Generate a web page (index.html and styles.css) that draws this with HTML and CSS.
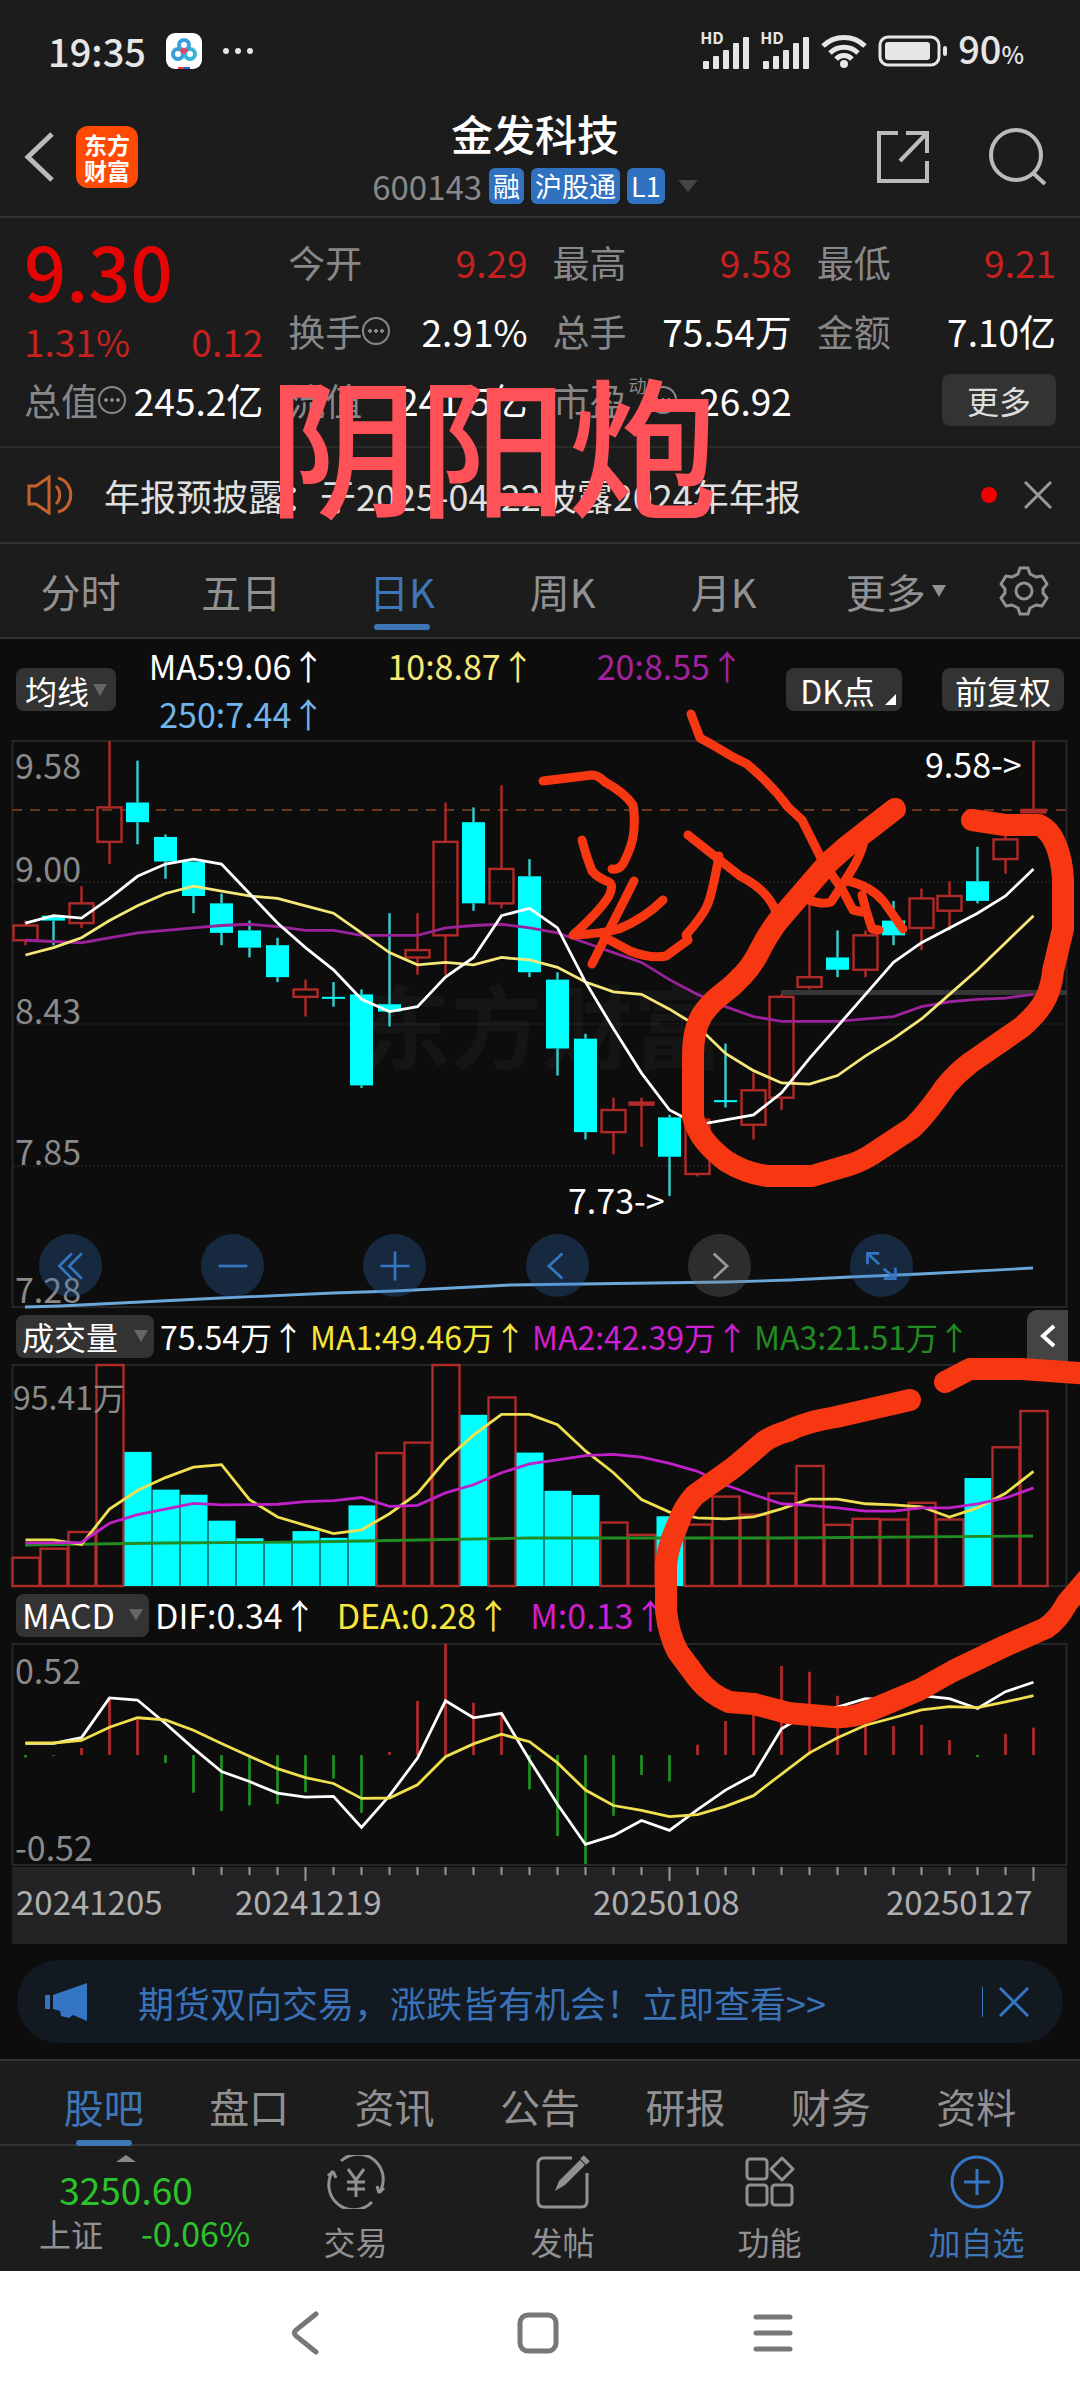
FILE: index.html
```html
<!DOCTYPE html>
<html lang="zh-CN">
<head>
<meta charset="utf-8">
<meta name="viewport" content="width=device-width, initial-scale=1">
<title>金发科技 600143</title>
<link rel="stylesheet" href="styles.css">
</head>
<body>

<div class="status">
  <span class="clock">19:35</span>
  <svg class="app-dot" width="36" height="36" viewBox="0 0 36 36">
    <rect width="36" height="36" rx="9" fill="#fff"/>
    <g fill="none" stroke-width="4"><circle cx="12" cy="21" r="5" stroke="#3aa0dc"/><circle cx="24" cy="21" r="5" stroke="#35b6d8"/><circle cx="18" cy="12" r="5" stroke="#3aa0dc"/><path d="M15 16l3 3 3-3" stroke="#e8455e"/></g>
    <path d="M12 34h6v2h-6z" fill="#e03c4c"/><path d="M18 34h6v2h-6z" fill="#2e63c9"/>
  </svg>
  <svg width="32" height="8" viewBox="0 0 32 8" fill="#e6e6e6"><circle cx="4" cy="4" r="3"/><circle cx="16" cy="4" r="3"/><circle cx="28" cy="4" r="3"/></svg>
  <div class="status-right">
    <span class="signal"><small>HD</small>
      <svg width="50" height="36" viewBox="0 0 50 36" fill="#e6e6e6"><rect x="3" y="28" width="6" height="8" rx="1"/><rect x="13" y="23" width="6" height="13" rx="1"/><rect x="23" y="17" width="6" height="19" rx="1"/><rect x="33" y="10" width="6" height="26" rx="1"/><rect x="43" y="4" width="6" height="32" rx="1"/></svg>
    </span>
    <span class="signal"><small>HD</small>
      <svg width="50" height="36" viewBox="0 0 50 36" fill="#e6e6e6"><rect x="3" y="28" width="6" height="8" rx="1"/><rect x="13" y="23" width="6" height="13" rx="1"/><rect x="23" y="17" width="6" height="19" rx="1"/><rect x="33" y="10" width="6" height="26" rx="1"/><rect x="43" y="4" width="6" height="32" rx="1"/></svg>
    </span>
    <svg width="48" height="34" viewBox="0 0 48 34" fill="none" stroke="#e6e6e6" stroke-width="5"><path d="M3 12a30 30 0 0 1 42 0M10 19a20 20 0 0 1 28 0M16 25a11 11 0 0 1 16 0"/><circle cx="24" cy="30" r="2" stroke-width="4"/></svg>
    <svg width="70" height="32" viewBox="0 0 70 32"><rect x="2" y="2" width="59" height="28" rx="8" fill="none" stroke="#e6e6e6" stroke-width="3"/><rect x="7" y="7" width="45" height="18" rx="3" fill="#e6e6e6"/><rect x="65" y="11" width="4" height="10" rx="2" fill="#e6e6e6"/></svg>
    <span class="clock">90<small>%</small></span>
  </div>
</div>

<header class="head">
  <div class="head-left">
    <button class="icon-btn" aria-label="返回"><svg width="34" height="52" viewBox="0 0 34 52" fill="none" stroke="#bbb" stroke-width="5"><path d="M30 3L6 26l24 23"/></svg></button>
    <div class="logo">东方<br>财富</div>
  </div>
  <div class="head-title">
    <h1>金发科技</h1>
    <div class="code"><span>600143</span><b>融</b><b>沪股通</b><b>L1</b><i class="tri"></i></div>
  </div>
  <div class="head-right">
    <button class="icon-btn" aria-label="分享"><svg width="54" height="54" viewBox="0 0 54 54" fill="none" stroke="#bbb" stroke-width="4"><path d="M22 3H3v48h48V31M30 3h21v20M51 3L24 31"/></svg></button>
    <button class="icon-btn" aria-label="搜索"><svg width="60" height="60" viewBox="0 0 60 60" fill="none" stroke="#bbb" stroke-width="4"><circle cx="28" cy="28" r="25"/><path d="M45 46l12 11"/></svg></button>
  </div>
</header>

<section class="quote">
  <div class="price">
    <strong>9.30</strong>
    <div class="cell red"><span>1.31%</span><span>0.12</span></div>
  </div>
  <div class="cell"><label>今开</label><span class="red">9.29</span></div>
  <div class="cell"><label>最高</label><span class="red">9.58</span></div>
  <div class="cell"><label>最低</label><span class="red">9.21</span></div>
  <div class="cell"><label>换手<i class="info"></i></label><span>2.91%</span></div>
  <div class="cell"><label>总手</label><span>75.54万</span></div>
  <div class="cell"><label>金额</label><span>7.10亿</span></div>
  <div class="cell"><label>总值<i class="info"></i></label><span>245.2亿</span></div>
  <div class="cell"><label>流值</label><span>241.5亿</span></div>
  <div class="cell"><label>市盈<sup>动</sup><i class="info"></i></label><span>26.92</span></div>
  <div class="cell end"><button class="more">更多</button></div>
  <div class="mark">阴阳炮</div>
</section>

<div class="notice">
  <svg width="48" height="40" viewBox="0 0 48 40" fill="none" stroke="#c4622a" stroke-width="3"><path d="M2 11h7L22 2v36L9 29H2zM29 11c5 5 5 13 0 18M31 3c17 4 17 30 0 34"/></svg>
  <p>年报预披露：于2025-04-22披露2024年年报</p>
  <i class="dot"></i>
  <button class="icon-btn" aria-label="关闭"><svg width="28" height="28" viewBox="0 0 28 28" stroke="#999" stroke-width="3"><path d="M1 1l26 26M27 1L1 27"/></svg></button>
</div>

<nav class="tabs">
  <button>分时</button>
  <button>五日</button>
  <button class="on">日K</button>
  <button>周K</button>
  <button>月K</button>
  <button class="drop">更多<i class="tri"></i></button>
  <button aria-label="设置"><svg width="50" height="50" viewBox="0 0 50 50" fill="none" stroke="#919193" stroke-width="3" stroke-linejoin="round"><path d="M21 2h8l2 6 6 3 6-1 5 8-4 5v4l4 5-5 8-6-1-6 3-2 6h-8l-2-6-6-3-6 1-5-8 4-5v-4l-4-5 5-8 6 1 6-3z"/><circle cx="25" cy="25" r="8"/></svg></button>
</nav>

<main class="charts">
  <div class="ma-row">
    <button class="chip">均线<i class="tri"></i></button>
    <div class="ma-list">
      <span>MA5:9.06↑</span><span class="yellow">10:8.87↑</span><span class="purple">20:8.55↑</span>
      <span class="blue">250:7.44↑</span>
    </div>
    <button class="chip dk">DK点<i class="corner"></i></button>
    <button class="chip wide">前复权</button>
  </div>

  <div class="kbox">
    <svg id="kline" class="plot" viewBox="0 0 1080 568"></svg>
    <div class="tools">
      <button aria-label="最左"><svg viewBox="0 0 40 40"><path d="M21 6L7 20l14 14M32 6L18 20l14 14"/></svg></button>
      <button aria-label="缩小"><svg viewBox="0 0 40 40"><path d="M4 20h32"/></svg></button>
      <button aria-label="放大"><svg viewBox="0 0 40 40"><path d="M4 20h32M20 4v32"/></svg></button>
      <button aria-label="左移"><svg viewBox="0 0 40 40"><path d="M26 6L11 20l15 14"/></svg></button>
      <button class="off" aria-label="右移"><svg viewBox="0 0 40 40"><path d="M14 6l15 14-15 14"/></svg></button>
      <button aria-label="全屏"><svg viewBox="0 0 40 40"><path d="M5 18V6h13M5 6l13 12M36 22v12H23M36 34L23 23"/></svg></button>
    </div>
  </div>

  <div class="ind-row">
    <button class="chip">成交量<i class="tri"></i></button>
    <span>75.54万↑</span><span class="yellow2">MA1:49.46万↑</span><span class="magenta">MA2:42.39万↑</span><span class="green2">MA3:21.51万↑</span>
    <button class="fold" aria-label="收起"><svg width="18" height="24" viewBox="0 0 18 24" fill="none" stroke="#fff" stroke-width="4"><path d="M15 2L4 12l11 10"/></svg></button>
  </div>
  <svg id="volume" class="plot" viewBox="0 0 1080 223"></svg>

  <div class="ind-row macd">
    <button class="chip">MACD<i class="tri"></i></button>
    <span>DIF:0.34↑</span><span class="yellow2">DEA:0.28↑</span><span class="magenta">M:0.13↑</span>
  </div>
  <svg id="macd" class="plot" viewBox="0 0 1080 301"></svg>

  <svg class="ink" viewBox="0 639 1080 1120" fill="none" stroke="#f73711" stroke-linecap="round" stroke-linejoin="round">
    <g stroke-width="22">
      <path d="M895 809L864 833Q845 847 829 862L778 921Q768 934 760 950T743 975Q733 986 722 994T702 1015Q693 1030 693 1055V1117Q697 1131 705 1141T726 1161Q745 1173 767 1176H812L846 1166Q858 1163 871 1155L912 1128Q926 1115 946 1086Q957 1073 970 1063L1022 1027Q1040 1011 1046 998T1053 971L1063 929V879Q1062 860 1056 845T1039 825H1005L972 820"/>
      <path d="M910 1400L836 1417Q805 1422 788 1431Q770 1436 760 1445T733 1468L695 1495Q683 1508 678 1524Q668 1545 666 1565V1611Q669 1636 678 1652L698 1679Q710 1694 729 1702L754 1704L788 1713L833 1717Q850 1718 864 1713L919 1690L953 1671L1005 1646L1046 1628Q1058 1620 1067 1603L1090 1576"/>
      <path d="M945 1382L970 1369H1022L1092 1374"/>
    </g>
    <g stroke-width="9">
      <path d="M543 781L592 775Q598 775 605 782Q625 793 633 805Q635 815 634 830T623 864Q619 870 612 869"/>
      <path d="M582 840Q586 856 592 871Q598 878 609 882Q614 885 609 896Q600 911 573 935Q600 934 619 929Q645 918 663 900M634 881L592 964"/>
      <path d="M604 937L630 951Q650 959 666 956L688 940L686 935Q702 917 707 906T719 856"/>
      <path d="M688 835L740 876Q768 890 776 912"/>
      <path d="M691 714L700 738Q708 742 733 757L747 764Q772 785 788 807L802 820L822 860L843 891L853 910L862 912"/>
      <path d="M864 841Q861 856 848 876T831 902Q822 905 809 900M848 881Q871 886 884 902L903 929M862 895L866 910L872 929L879 930"/>
    </g>
  </svg>

  <div class="banner">
    <svg width="42" height="38" viewBox="0 0 42 38" fill="#3475c4"><path d="M0 12h5v14H0zM8 12L42 0v38l-14-6-4 3-8-2-1-5-7-2z"/></svg>
    <a href="#">期货双向交易，涨跌皆有机会！立即查看&gt;&gt;</a>
    <button class="icon-btn" aria-label="关闭广告"><svg width="30" height="30" viewBox="0 0 30 30" stroke="#3475c4" stroke-width="3"><path d="M1 1l28 28M29 1L1 29"/></svg></button>
  </div>
</main>

<nav class="sub-tabs">
  <button class="on">股吧</button><button>盘口</button><button>资讯</button><button>公告</button><button>研报</button><button>财务</button><button>资料</button>
</nav>

<footer class="bottom">
  <div class="index">
    <i class="tri up"></i>
    <div class="point">3250.60</div>
    <div class="change"><label>上证</label><span>-0.06%</span></div>
  </div>
  <button><svg width="58" height="54" viewBox="0 0 58 54" fill="none" stroke="#919193" stroke-width="3"><path d="M14 6a25 25 0 0 1 38 32M52 38l5-5M52 38l-2-7M45 47A25 25 0 0 1 6 16M6 16l-5 5M6 16l3 7M21 14l8 11 8-11M29 25v17M20 27h18M20 34h18"/></svg>交易</button>
  <button><svg width="58" height="54" viewBox="0 0 58 54" fill="none" stroke="#919193" stroke-width="3"><path d="M38 3H10q-6 0-6 6v37q0 6 6 6h37q6 0 6-6V18"/><path d="M21 36l4-10L46 5l5 5-20 20z" fill="#919193" stroke="none"/><path d="M48 2l6 6" stroke-width="5"/></svg>发帖</button>
  <button><svg width="58" height="54" viewBox="0 0 58 54" fill="none" stroke="#919193" stroke-width="3"><rect x="6" y="4" width="20" height="20" rx="3"/><rect x="6" y="30" width="20" height="20" rx="3"/><rect x="31" y="30" width="20" height="20" rx="3"/><path d="M41 3l11 11-11 11-11-11z" stroke-linejoin="round"/></svg>功能</button>
  <button class="on"><svg width="58" height="54" viewBox="0 0 58 54" fill="none" stroke="#3475c4" stroke-width="3"><circle cx="29" cy="27" r="25"/><path d="M16 27h26M29 14v26"/></svg>加自选</button>
</footer>

<div class="sysnav">
  <button aria-label="后退"><svg width="40" height="44" viewBox="0 0 40 44"><path d="M31 3L11 19q-3 3 0 6l20 16"/></svg></button>
  <button aria-label="主页"><svg width="44" height="44" viewBox="0 0 44 44"><rect x="4" y="4" width="36" height="36" rx="8"/></svg></button>
  <button aria-label="任务"><svg width="44" height="44" viewBox="0 0 44 44"><path d="M5 6h34M5 22h34M5 38h34"/></svg></button>
</div>

<script src="chart.js"></script>
</body>
</html>
```

FILE: styles.css
```css
* {
  box-sizing: border-box;
}
body {
  margin: 0;
  background: #1c1c1c;
  color: #fff;
  font-family: "Noto Sans CJK SC", "Noto Sans", sans-serif;
  font-size: 36px;
  line-height: 48px;
}
button {
  margin: 0;
  padding: 0;
  border: none;
  background: none;
  color: inherit;
  font: inherit;
  cursor: pointer;
}
svg {
  display: block;
  flex: none;
}
a {
  color: inherit;
  text-decoration: none;
}
.red { color: #c8201f; }
.yellow { color: #f6e878; }
.purple { color: #a3229f; }
.blue { color: #72b4ec; }
.yellow2 { color: #f5e63c; }
.magenta { color: #d01fd0; }
.green2 { color: #228b22; }

.tri {
  border: 7px solid transparent;
  border-top: 12px solid #666;
  border-bottom: 0;
}
.tri.up {
  border: 10px solid transparent;
  border-bottom: 7px solid #888;
  border-top: 0;
}

/* status bar */
.status {
  display: flex;
  align-items: center;
  height: 104px;
  padding: 0 56px 2px 48px;
  gap: 20px;
}
.clock {
  font-size: 38px;
  font-weight: 500;
  color: #e6e6e6;
}
.clock small {
  font-size: 24px;
}
.status-right {
  display: flex;
  align-items: center;
  gap: 10px;
  margin-left: auto;
}
.signal {
  position: relative;
}
.signal small {
  position: absolute;
  left: 0;
  top: -6px;
  font-size: 16px;
  font-weight: 700;
  line-height: 20px;
  color: #e6e6e6;
}

/* header */
.head {
  display: flex;
  justify-content: space-between;
  height: 114px;
  padding: 0 32px 6px 22px;
  border-bottom: 2px solid #333;
}
.head-left, .head-right {
  display: flex;
  align-items: center;
  width: 180px;
  gap: 20px;
}
.head-right {
  gap: 58px;
  justify-content: flex-end;
}
.logo {
  width: 62px;
  height: 62px;
  padding-top: 5px;
  border-radius: 12px;
  background: #ff4a05;
  font-size: 23px;
  font-weight: 700;
  line-height: 26px;
  text-align: center;
}
.head-title {
  text-align: center;
}
.head-title h1 {
  margin: 0;
  font-size: 42px;
  font-weight: 500;
  line-height: 58px;
}
.code {
  display: flex;
  align-items: center;
  gap: 7px;
  color: #88888a;
  font-size: 33px;
}
.code b {
  padding: 0 4px;
  border-radius: 6px;
  background: #3072c0;
  color: #fff;
  font-size: 27px;
  font-weight: 400;
  line-height: 36px;
}
.code .tri {
  margin-left: 6px;
  border-width: 12px 10px 0;
  border-top-color: #444;
}

/* quote numbers */
.quote {
  position: relative;
  display: grid;
  grid-template-columns: repeat(4, 1fr);
  grid-auto-rows: 69px;
  column-gap: 25px;
  height: 230px;
  padding: 9px 24px 0;
  border-bottom: 2px solid #2a2a2a;
  font-size: 37px;
}
.price {
  grid-row: span 2;
}
.price strong {
  display: block;
  height: 90px;
  color: #e60505;
  font-size: 74px;
  font-weight: 500;
  line-height: 86px;
}
.cell {
  display: flex;
  align-items: center;
  justify-content: space-between;
}
.cell label {
  display: flex;
  align-items: center;
  color: #88888a;
}
.cell sup {
  padding: 0 2px;
  font-size: 18px;
  line-height: 18px;
  align-self: flex-start;
}
.info {
  width: 28px;
  height: 28px;
  border: 2px solid #88888a;
  border-radius: 50%;
  background: radial-gradient(circle, #88888a 2px, transparent 2px) center / 6px 24px no-repeat,
    radial-gradient(circle, #88888a 2px, transparent 2px) 3px 50% / 6px 24px no-repeat,
    radial-gradient(circle, #88888a 2px, transparent 2px) 15px 50% / 6px 24px no-repeat;
}
.cell.end {
  justify-content: flex-end;
}
.more {
  width: 114px;
  height: 52px;
  border-radius: 8px;
  background: #333;
  color: #ddd;
  font-size: 32px;
}
.mark {
  position: absolute;
  left: 268px;
  top: 138px;
  z-index: 2;
  color: #ff5158;
  font-size: 150px;
  font-weight: 500;
  line-height: 170px;
  white-space: nowrap;
}

/* notice */
.notice {
  display: flex;
  align-items: center;
  height: 96px;
  padding: 0 28px 0 27px;
  border-bottom: 2px solid #333;
}
.notice p {
  flex: 1;
  margin: 0 0 0 29px;
  color: #e0e0e0;
}
.dot {
  width: 16px;
  height: 16px;
  margin-right: 27px;
  border-radius: 50%;
  background: #f00000;
}

/* period tabs */
.tabs {
  display: grid;
  grid-template-columns: repeat(5, 15fr) 16fr 9fr;
  height: 95px;
  padding-right: 8px;
  border-bottom: 2px solid #333;
}
.tabs button {
  position: relative;
  display: flex;
  align-items: center;
  justify-content: center;
  gap: 6px;
  color: #919193;
  font-size: 40px;
}
.tabs .drop {
  padding-left: 12px;
}
.tabs button.on, .sub-tabs button.on {
  color: #3f76b8;
}
.tabs .on::after, .sub-tabs .on::after {
  content: "";
  position: absolute;
  left: calc(50% - 28px);
  bottom: 7px;
  width: 56px;
  height: 6px;
  border-radius: 3px;
  background: #3f76b8;
}
.tabs .tri {
  border-top-color: #919193;
}

/* charts */
.charts {
  position: relative;
  overflow: hidden;
  padding-bottom: 16px;
  background: #0d0d0d;
}
.plot {
  width: 100%;
  height: auto;
  overflow: visible;
}
.plot text {
  font-size: 34px;
  fill: #8a8a8a;
}
.plot .small {
  font-size: 32px;
}
.plot .white {
  fill: #fff;
}
.plot .date {
  font-size: 33px;
  fill: #b0b0b0;
}
.plot .watermark {
  font-size: 91px;
  font-weight: 700;
  fill: #151515;
}
.chip {
  display: flex;
  align-items: center;
  justify-content: center;
  gap: 4px;
  height: 43px;
  padding: 0 9px;
  border-radius: 8px;
  background: #333;
  font-size: 32px;
  line-height: 42px;
}
.chip.wide {
  padding: 0 13px;
}
.ma-row {
  display: flex;
  align-items: center;
  height: 101px;
  padding: 0 16px;
}
.ma-list {
  display: grid;
  grid-template-columns: repeat(3, 1fr);
  flex: 1;
  margin-right: 42px;
  font-size: 34px;
  text-align: right;
}
.dk {
  position: relative;
  width: 116px;
  margin-right: 40px;
  padding-right: 22px;
}
.corner {
  position: absolute;
  right: 6px;
  bottom: 6px;
  border-left: 11px solid transparent;
  border-bottom: 11px solid #fff;
}
.kbox {
  position: relative;
}
.tools {
  position: absolute;
  left: 0;
  right: 0;
  bottom: 11px;
  display: flex;
  justify-content: space-between;
  padding: 0 167px 0 39px;
}
.tools button {
  display: flex;
  align-items: center;
  justify-content: center;
  width: 63px;
  height: 63px;
  border-radius: 50%;
  background: rgba(48, 114, 192, .28);
}
.tools svg {
  width: 40px;
  height: 36px;
  fill: none;
  stroke: #3475c4;
  stroke-width: 3;
}
.tools .off {
  background: rgba(120, 120, 120, .3);
}
.tools .off svg {
  stroke: #999;
}
.ind-row {
  display: flex;
  align-items: center;
  gap: 6px;
  height: 56px;
  padding: 0 12px 0 16px;
  font-size: 32px;
  white-space: nowrap;
}
.ind-row .chip {
  gap: 16px;
  padding: 0 6px;
}
.ind-row.macd {
  gap: 20px;
  font-size: 34px;
}
.ind-row.macd .chip {
  margin-right: -14px;
  font-size: 34px;
  gap: 14px;
}
.fold {
  display: flex;
  align-items: center;
  justify-content: center;
  width: 41px;
  height: 52px;
  margin-left: auto;
  border-radius: 10px 0 0 0;
  background: #444;
}
.ink {
  position: absolute;
  left: 0;
  top: 0;
  width: 100%;
  height: auto;
  pointer-events: none;
}
.banner {
  display: flex;
  align-items: center;
  height: 83px;
  margin: 16px 17px 0;
  padding: 0 34px 0 28px;
  border-radius: 42px;
  background: #121921;
  color: #3a72b8;
}
.banner a {
  flex: 1;
  margin-left: 51px;
}
.banner .icon-btn {
  padding-left: 16px;
  border-left: 1px solid #3475c4;
}

/* lower tabs */
.sub-tabs {
  display: grid;
  grid-template-columns: repeat(7, 1fr);
  height: 87px;
  padding: 0 31px;
  border-top: 2px solid #333;
  border-bottom: 2px solid #333;
}
.sub-tabs button {
  position: relative;
  padding-top: 6px;
  color: #919193;
  font-size: 40px;
}
.sub-tabs .on::after {
  bottom: -2px;
}

.bottom {
  display: grid;
  grid-template-columns: 252px repeat(4, 1fr);
  height: 125px;
}
.bottom button {
  display: flex;
  flex-direction: column;
  align-items: center;
  gap: 4px;
  padding-top: 9px;
  color: #919193;
  font-size: 32px;
  line-height: 56px;
}
.bottom button.on {
  color: #3f76b8;
}
.index {
  display: flex;
  flex-direction: column;
  align-items: center;
  padding-top: 9px;
  color: #2bc22b;
}
.point {
  margin-top: 3px;
  font-size: 37px;
}
.change {
  display: flex;
  gap: 38px;
  padding-left: 39px;
  font-size: 34px;
  line-height: 40px;
  align-self: flex-start;
}
.change label {
  color: #919193;
  font-size: 32px;
}

.sysnav {
  display: flex;
  align-items: center;
  justify-content: center;
  gap: 191px;
  height: 130px;
  padding-bottom: 6px;
  background: #fff;
}
.sysnav svg {
  fill: none;
  stroke: #777;
  stroke-width: 5;
  stroke-linecap: round;
}
```

FILE: chart.js
```js
// [high, body top, body bottom, low, 1 = up / 0 = down, volume]
var days = [
  [8.85, 8.83, 8.77, 8.75, 1, 12.2],
  [8.87, 8.87, 8.85, 8.75, 0, 16.1],
  [8.99, 8.92, 8.84, 8.82, 1, 23.3],
  [9.58, 9.31, 9.17, 9.08, 1, 95.41],
  [9.50, 9.33, 9.25, 9.16, 0, 57.9],
  [9.20, 9.19, 9.09, 9.02, 0, 41.6],
  [9.09, 9.09, 8.95, 8.88, 0, 39.4],
  [8.96, 8.92, 8.80, 8.75, 0, 28.2],
  [8.85, 8.81, 8.74, 8.70, 0, 20.6],
  [8.78, 8.75, 8.62, 8.60, 0, 19.4],
  [8.61, 8.57, 8.54, 8.46, 1, 23.7],
  [8.60, 8.54, 8.54, 8.50, 0, 20.8],
  [8.57, 8.55, 8.18, 8.17, 0, 34.8],
  [8.88, 8.51, 8.48, 8.42, 0, 57.4],
  [8.88, 8.73, 8.70, 8.63, 1, 61.9],
  [9.33, 9.17, 8.79, 8.63, 1, 95.41],
  [9.31, 9.25, 8.92, 8.89, 0, 73.9],
  [9.40, 9.06, 8.92, 8.90, 1, 81.4],
  [9.10, 9.03, 8.64, 8.62, 0, 57.6],
  [8.64, 8.61, 8.33, 8.22, 0, 41.1],
  [8.39, 8.37, 7.99, 7.96, 0, 39.3],
  [8.13, 8.08, 7.99, 7.90, 1, 27.4],
  [8.13, 8.11, 8.11, 7.93, 1, 22.1],
  [8.06, 8.05, 7.89, 7.73, 0, 30.1],
  [8.06, 8.04, 7.82, 7.81, 1, 26.5],
  [8.35, 8.12, 8.12, 8.09, 0, 38.6],
  [8.23, 8.16, 8.02, 7.96, 1, 30.8],
  [8.55, 8.54, 8.13, 8.08, 1, 40.0],
  [8.94, 8.62, 8.58, 8.57, 1, 51.8],
  [8.81, 8.70, 8.65, 8.62, 0, 26.4],
  [8.81, 8.79, 8.65, 8.62, 1, 29.0],
  [8.93, 8.85, 8.79, 8.75, 0, 28.7],
  [8.98, 8.94, 8.82, 8.73, 1, 35.9],
  [9.01, 8.95, 8.89, 8.81, 1, 28.7],
  [9.15, 9.01, 8.93, 8.92, 0, 46.6],
  [9.20, 9.18, 9.10, 9.04, 1, 59.9],
  [9.58, 9.30, 9.29, 9.29, 1, 75.54]
];
// days whose volume bar is filled (close below the previous close)
var downVol = [4, 5, 6, 7, 8, 9, 10, 11, 12, 16, 18, 19, 20, 23, 34];
var ma5 = [8.84, 8.87, 8.86, 8.94, 9.03, 9.08, 9.10, 9.08, 8.96, 8.84, 8.74, 8.65, 8.53, 8.48, 8.50, 8.62, 8.70, 8.87, 8.90, 8.82, 8.60, 8.41, 8.23, 8.08, 8.02, 8.04, 8.06, 8.15, 8.29, 8.42, 8.55, 8.68, 8.76, 8.82, 8.88, 8.95, 9.06];
var ma10 = [8.71, 8.74, 8.78, 8.85, 8.91, 8.96, 8.99, 8.97, 8.95, 8.94, 8.91, 8.88, 8.80, 8.72, 8.67, 8.68, 8.67, 8.70, 8.69, 8.66, 8.60, 8.56, 8.55, 8.49, 8.42, 8.31, 8.24, 8.19, 8.185, 8.22, 8.30, 8.37, 8.45, 8.55, 8.65, 8.76, 8.87];
var ma20 = [8.77, 8.765, 8.76, 8.78, 8.80, 8.81, 8.82, 8.83, 8.835, 8.825, 8.81, 8.81, 8.79, 8.79, 8.79, 8.82, 8.83, 8.835, 8.82, 8.80, 8.76, 8.72, 8.68, 8.61, 8.55, 8.50, 8.46, 8.44, 8.44, 8.44, 8.45, 8.46, 8.50, 8.52, 8.53, 8.535, 8.55];
var vma1 = [19.9, 19.9, 17.9, 33.2, 41.2, 46.8, 51.3, 52.4, 37.3, 29.8, 26.2, 22.6, 24.2, 31.2, 40, 54.3, 65.1, 74.1, 74.1, 69.6, 58.3, 48.9, 37.3, 31.9, 29.4, 29, 29.8, 33.3, 37.5, 37.5, 35.5, 35, 34.2, 29.8, 33.7, 40, 49.46];
var vma2 = [18.6, 18.6, 18.8, 27.1, 30.8, 33.2, 35.7, 35, 35.1, 35.3, 36.4, 36.9, 38.2, 34.4, 34.8, 40.2, 43.7, 48.9, 52.7, 54.5, 56.3, 56.8, 55.6, 52.9, 49.5, 43.6, 39.4, 35.5, 34.8, 33.7, 32.3, 32.3, 33.7, 33.7, 35.5, 38, 42.39];
var dif = [.054, .054, .081, .267, .257, .147, .031, -.077, -.124, -.178, -.197, -.193, -.338, -.190, -.014, .253, .174, .195, -.023, -.230, -.418, -.377, -.306, -.352, -.255, -.164, -.093, .122, .199, .224, .263, .257, .277, .263, .217, .296, .340];
var dea = [.056, .056, .068, .130, .174, .164, .116, .054, -.006, -.064, -.106, -.133, -.203, -.201, -.139, -.008, .052, .097, .062, -.037, -.164, -.236, -.259, -.288, -.279, -.240, -.190, -.089, .010, .081, .139, .174, .211, .226, .221, .248, .277];
var hist = [-.012, -.004, .033, .267, .166, -.037, -.176, -.261, -.236, -.23, -.174, -.11, -.271, .014, .253, .52, .244, .195, -.161, -.379, -.51, -.284, -.093, -.124, .048, .159, .19, .416, .389, .277, .151, .135, .141, .07, -.01, .099, .128];

var RED = '#b02a2a', CYAN = '#00ffff', FRAME = '#262628';

function px(i) { return 25.5 + 28 * i; }
function priceY(p) { return 1 + (9.58 - p) * 246; }
function volY(v) { return 222 - v / 95.41 * 221; }
function macdY(v) { return 112 - v * 214; }

function rect(x, y, w, h, attrs) {
  return '<rect x="' + x + '" y="' + y + '" width="' + w + '" height="' + h + '" ' + attrs + '/>';
}
function line(x1, y1, x2, y2, color, width, extra) {
  return '<line x1="' + x1 + '" y1="' + y1 + '" x2="' + x2 + '" y2="' + y2 + '" stroke="' + color + '" stroke-width="' + width + '" ' + (extra || '') + '/>';
}
function text(x, y, str, cls) {
  return '<text x="' + x + '" y="' + y + '" class="' + (cls || '') + '">' + str + '</text>';
}
function curve(values, fy, color) {
  var pts = values.map(function (v, i) { return px(i) + ',' + fy(v); });
  return '<polyline points="' + pts.join(' ') + '" fill="none" stroke="' + color + '" stroke-width="2.8"/>';
}
function frame(h) {
  return rect(12.5, 1, 1054, h, 'fill="none" stroke="' + FRAME + '" stroke-width="2"');
}

function drawKline() {
  var s = text(360, 322, '东方财富', 'watermark') + frame(566);
  [142, 284, 426].forEach(function (y) {
    s += line(13, y, 1067, y, '#333', 1, 'stroke-dasharray="2 2"');
  });
  s += line(12, 70, 1067, 70, '#6b3518', 2, 'stroke-dasharray="10 8"');
  s += rect(781, 250, 286, 5, 'fill="#363636"');
  days.forEach(function (d, i) {
    var x = px(i), top = priceY(d[1]), bot = priceY(d[2]);
    var h = Math.max(bot - top, 2), c = d[4] ? RED : '#35d0d0';
    s += line(x, priceY(d[0]), x, top, c, 2.4) + line(x, bot, x, priceY(d[3]), c, 2.4);
    if (d[4]) s += rect(x - 12, top, 24, h, 'fill="none" stroke="' + RED + '" stroke-width="2.4"');
    else s += rect(x - 11.5, top, 23, h, 'fill="' + CYAN + '"');
  });
  s += curve(ma20, priceY, '#9a229a') + curve(ma10, priceY, '#f6e878') + curve(ma5, priceY, '#fff');
  s += '<path d="M25 567L60 566L221 558L333 553L395 551L510 545L725 542L790 540L850 537L920 534L1033 528" fill="none" stroke="#6aa8dc" stroke-width="2.8"/>';
  [['9.58', 39], ['9.00', 142], ['8.43', 284], ['7.85', 425], ['7.28', 563]].forEach(function (t) {
    s += text(15, t[1], t[0]);
  });
  s += text(925, 38, '9.58-&gt;', 'white') + text(568, 474, '7.73-&gt;', 'white');
  document.getElementById('kline').innerHTML = s;
}

function drawVolume() {
  var s = frame(221);
  days.forEach(function (d, i) {
    var x = px(i), y = volY(d[5]);
    if (downVol.indexOf(i) < 0) s += rect(x - 13, y, 27, 222 - y, 'fill="none" stroke="' + RED + '" stroke-width="2.4"');
    else s += rect(x - 13, y, 27, 222 - y, 'fill="' + CYAN + '"');
  });
  s += '<path d="M25 181L165 179L305 178L418 176L530 174H782L1033 172" fill="none" stroke="#228b22" stroke-width="2.8"/>';
  s += curve(vma1, volY, '#f0e050') + curve(vma2, volY, '#c020c8');
  s += text(13, 46, '95.41万', 'small');
  document.getElementById('volume').innerHTML = s;
}

function drawMacd() {
  var s = frame(221) + rect(12, 224, 1055, 77, 'fill="#232325"');
  hist.forEach(function (v, i) {
    s += line(px(i), macdY(0), px(i), macdY(v), v > 0 ? RED : '#228b22', 2.8);
  });
  s += curve(dif, macdY, '#fff') + curve(dea, macdY, '#f0e050');
  for (var i = 6; i < days.length; i++) {
    var big = i == 10 || i == 23 || i == 36;
    s += line(px(i), 224, px(i), big ? 238 : 232, '#999', 2);
  }
  s += text(15, 41, '0.52') + text(15, 218, '-0.52');
  s += text(16, 272, '20241205', 'date') + text(235, 272, '20241219', 'date');
  s += text(593, 272, '20250108', 'date') + text(886, 272, '20250127', 'date');
  document.getElementById('macd').innerHTML = s;
}

drawKline();
drawVolume();
drawMacd();
```
